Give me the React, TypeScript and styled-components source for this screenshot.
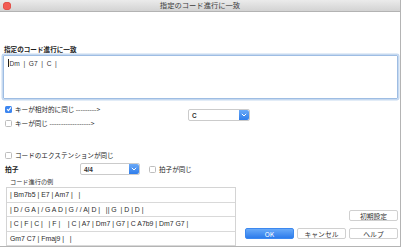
import { createGlobalStyle, styled } from 'styled-components';

const GlobalStyle = createGlobalStyle`
  html, body {
    margin: 0;
    padding: 0;
    background: #ffffff;
    overflow: hidden;
  }
  body {
    font-family: "Noto Sans CJK JP", "Liberation Sans", sans-serif;
    color: #222222;
  }
`;

const EXAMPLES = [
  '| Bm7b5 | E7 | Am7 |   |',
  '| D / G A | / G A D | G / / A| D |   || G  | D | D |',
  '| C | F | C |   | F |    | C | A7 | Dm7 | G7 | C A7b9 | Dm7 G7 |',
  'Gm7 C7 | Fmaj9 |   |',
];

const Check = ({ checked, label }: { checked?: boolean; label: string }) => (
  <S.CheckRow>
    <S.Box $checked={checked}>
      {checked && (
        <svg width="6" height="6" viewBox="0 0 6 6">
          <path d="M1 3.2 L2.4 4.6 L5 1.4" stroke="#fff" strokeWidth="1.1" fill="none" />
        </svg>
      )}
    </S.Box>
    <span>{label}</span>
  </S.CheckRow>
);

const Select = ({ value, width }: { value: string; width: number }) => (
  <S.Select $width={width}>
    <span>{value}</span>
    <S.Arrow>
      <svg width="6" height="4" viewBox="0 0 6 4">
        <path d="M0.8 0.8 L3 3 L5.2 0.8" stroke="#fff" strokeWidth="1" fill="none" />
      </svg>
    </S.Arrow>
  </S.Select>
);

const App = () => {
  return (
    <S.Window>
      <GlobalStyle />
      <S.TitleBar>
        <S.Close />
        <S.Title>指定のコード進行に一致</S.Title>
      </S.TitleBar>
      <S.Content>
        <S.Label>指定のコード進行に一致</S.Label>
        <S.TextArea>
          <S.Caret />
          Dm&nbsp;&nbsp;|&nbsp;&nbsp;G7&nbsp;&nbsp;|&nbsp;&nbsp;C&nbsp;&nbsp;|
        </S.TextArea>
        <S.KeyBlock>
          <S.KeyChecks>
            <Check checked label="キーが相対的に同じ --------->" />
            <Check label="キーが同じ ------------------>" />
          </S.KeyChecks>
          <S.KeySelect>
            <Select value="C" width={62} />
          </S.KeySelect>
        </S.KeyBlock>
        <S.ExtRow>
          <Check label="コードのエクステンションが同じ" />
        </S.ExtRow>
        <S.MeterRow>
          <S.MeterLabel>拍子</S.MeterLabel>
          <Select value="4/4" width={60} />
          <S.MeterCheck>
            <Check label="拍子が同じ" />
          </S.MeterCheck>
        </S.MeterRow>
        <S.Bottom>
          <S.ExampleCol>
            <S.SubLabel>コード進行の例</S.SubLabel>
            <S.List>
              {EXAMPLES.map((row) => (
                <S.ListRow key={row}>{row}</S.ListRow>
              ))}
            </S.List>
          </S.ExampleCol>
          <S.Buttons>
            <S.Button>初期設定</S.Button>
            <S.ButtonRow>
              <S.Button $primary>OK</S.Button>
              <S.Button>キャンセル</S.Button>
              <S.Button>ヘルプ</S.Button>
            </S.ButtonRow>
          </S.Buttons>
        </S.Bottom>
      </S.Content>
    </S.Window>
  );
};

const S = {
  Window: styled.div`
    display: flex;
    flex-direction: column;

    width: 401px;
    height: 247px;
    box-sizing: border-box;
    border-right: 1px solid #b4b4b4;
    border-bottom: 1px solid #b4b4b4;

    background: #ffffff;
  `,

  TitleBar: styled.div`
    position: relative;
    display: flex;
    align-items: center;
    justify-content: center;

    height: 12px;
    box-sizing: border-box;
    border-bottom: 1px solid #b3b3b3;

    background: linear-gradient(#ebebeb, #d3d3d3);
  `,

  Close: styled.div`
    position: absolute;
    left: 3px;
    top: 1.5px;

    width: 8px;
    height: 8px;
    border-radius: 50%;

    background: #f25c54;
    box-shadow: inset 0 0 0 0.5px #d9423b;
  `,

  Title: styled.span`
    color: #3c3c3c;
    font-size: 7.3px;
    line-height: 11px;
  `,

  Content: styled.div`
    display: flex;
    flex: 1;
    flex-direction: column;

    padding: 0 2px 0 3px;
  `,

  Label: styled.div`
    margin-top: 32px;
    margin-left: 1px;

    font-size: 6.6px;
    font-weight: 700;
    line-height: 11px;
    color: #1e1e1e;
  `,

  TextArea: styled.div`
    display: flex;
    align-items: flex-start;

    height: 44px;
    box-sizing: border-box;
    padding: 3px 4px;
    border: 1px solid #9ebde3;
    border-radius: 1px;
    box-shadow: 0 0 0 1.5px #c6d9f0;

    font-family: "Liberation Sans", sans-serif;
    font-size: 6.6px;
    line-height: 9px;
    color: #333333;
  `,

  Caret: styled.span`
    display: inline-block;

    width: 1px;
    height: 8px;
    margin-right: 0.5px;

    background: #222222;
  `,

  KeyBlock: styled.div`
    display: flex;

    margin-top: 3px;
  `,

  KeyChecks: styled.div`
    display: flex;
    flex-direction: column;

    width: 185px;
  `,

  KeySelect: styled.div`
    margin-top: 7px;
  `,

  CheckRow: styled.label`
    display: flex;
    align-items: center;
    gap: 3px;

    height: 14px;
    padding-left: 2px;

    font-size: 6.6px;
    color: #222222;
    white-space: nowrap;
  `,

  Box: styled.span<{ $checked?: boolean }>`
    display: flex;
    align-items: center;
    justify-content: center;

    width: 7px;
    height: 7px;
    box-sizing: border-box;
    border: ${({ $checked }) => ($checked ? '0' : '0.6px solid #bdbdbd')};
    border-radius: 1.5px;

    background: ${({ $checked }) => ($checked ? '#3d86f0' : '#ffffff')};
  `,

  Select: styled.div<{ $width: number }>`
    display: flex;
    align-items: center;
    justify-content: space-between;

    width: ${({ $width }) => $width}px;
    height: 12px;
    box-sizing: border-box;
    padding-left: 3px;
    border: 0.6px solid #cbcbcb;
    border-radius: 2px;

    background: #ffffff;
    font-family: "Liberation Sans", sans-serif;
    font-size: 6.4px;
    font-weight: 700;
    color: #333333;
  `,

  Arrow: styled.span`
    display: flex;
    align-items: center;
    justify-content: center;

    width: 10px;
    height: 100%;
    border-radius: 0 2px 2px 0;

    background: linear-gradient(#6aa9f7, #2f7deb);
  `,

  ExtRow: styled.div`
    margin-top: 18px;
  `,

  MeterRow: styled.div`
    display: flex;
    align-items: center;

    height: 14px;
  `,

  MeterLabel: styled.span`
    width: 75px;
    padding-left: 2px;

    font-size: 6.8px;
    font-weight: 700;
  `,

  MeterCheck: styled.div`
    margin-left: 7px;
  `,

  Bottom: styled.div`
    display: flex;
    flex: 1;
    align-items: flex-end;
    justify-content: space-between;
  `,

  ExampleCol: styled.div`
    display: flex;
    flex-direction: column;

    width: 233px;
  `,

  SubLabel: styled.div`
    padding-left: 7px;

    font-size: 6.2px;
    line-height: 11px;
    color: #333333;
  `,

  List: styled.div`
    display: flex;
    flex-direction: column;

    margin-left: 3px;
    border: 0.6px solid #d4d4d4;
    border-bottom: 0;
  `,

  ListRow: styled.div`
    height: 14.5px;
    box-sizing: border-box;
    padding-left: 3px;
    border-bottom: 0.6px solid #d9d9d9;

    font-family: "Liberation Sans", sans-serif;
    font-size: 6.9px;
    line-height: 14px;
    color: #2a2a2a;
    white-space: pre;
  `,

  Buttons: styled.div`
    display: flex;
    flex-direction: column;
    align-items: flex-end;
    gap: 7px;

    padding-bottom: 7px;
  `,

  ButtonRow: styled.div`
    display: flex;
    gap: 3px;
  `,

  Button: styled.button<{ $primary?: boolean }>`
    width: 49px;
    height: 11px;
    box-sizing: border-box;
    padding: 0;
    border: 0.6px solid ${({ $primary }) => ($primary ? '#3c88ef' : '#d0d0d0')};
    border-radius: 2px;

    background: ${({ $primary }) => ($primary ? 'linear-gradient(#69aaf8, #2d7cec)' : '#ffffff')};
    font-family: "Noto Sans CJK JP", "Liberation Sans", sans-serif;
    font-size: 6.8px;
    line-height: 10px;
    color: ${({ $primary }) => ($primary ? '#ffffff' : '#333333')};
  `,
};

export default App;
